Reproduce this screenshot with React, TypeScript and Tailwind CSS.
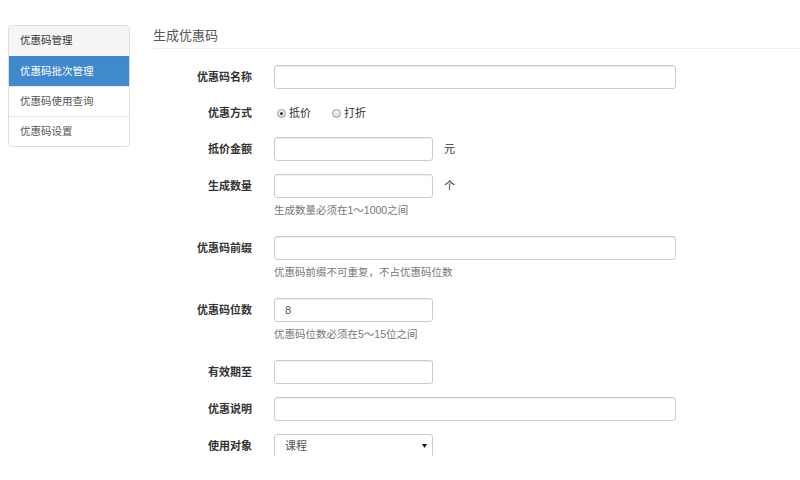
import React from "react";

const font = { fontFamily: '"Liberation Sans", "Noto Sans CJK SC", sans-serif' };

const menu = ["优惠码批次管理", "优惠码使用查询", "优惠码设置"];

function Label({ children }: { children: React.ReactNode }) {
  return (
    <div className="w-[99px] shrink-0 text-right text-[11px] font-bold leading-[24px] text-[#333]">
      {children}
    </div>
  );
}

function Field({ wide, value }: { wide?: boolean; value?: string }) {
  return (
    <div
      className={`h-[24px] ${
        wide ? "w-[402px]" : "w-[159px]"
      } rounded-[3px] border border-[#ccc] bg-white px-[10px] text-[11px] leading-[22px] text-[#555] shadow-[inset_0_1px_1px_rgba(0,0,0,0.075)]`}
    >
      {value}
    </div>
  );
}

function Help({ children }: { children: React.ReactNode }) {
  return (
    <div className="pb-[5px] pl-[121px] pt-[4px] text-[10.5px] leading-[16px] text-[#777]">
      {children}
    </div>
  );
}

function Radio({ checked, label }: { checked?: boolean; label: string }) {
  return (
    <div className="flex items-center">
      <span className="flex h-[9px] w-[9px] items-center justify-center rounded-full border border-[#9a9a9a] bg-gradient-to-b from-[#f4f4f4] to-[#dcdcdc]">
        {checked && <span className="h-[3px] w-[3px] rounded-full bg-[#333]" />}
      </span>
      <span className="ml-[3px] text-[11px] text-[#333]">{label}</span>
    </div>
  );
}

export default function App() {
  return (
    <div className="h-[456px] w-[800px] overflow-hidden bg-white" style={font}>
      <div className="flex pl-[8px] pt-[25px]">
        <div className="h-[122px] w-[122px] shrink-0 overflow-hidden rounded-[4px] border border-[#ddd] text-[10.5px]">
          <div className="flex h-[30px] items-center bg-[#f5f5f5] pl-[11px] text-[#333]">优惠码管理</div>
          {menu.map((item, i) => (
            <div
              key={item}
              className={`flex h-[30px] items-center border-t pl-[11px] ${
                i === 0
                  ? "border-[#3a87cd] bg-[#3f89cc] text-white"
                  : "border-[#e5e5e5] bg-white text-[#555]"
              }`}
            >
              {item}
            </div>
          ))}
        </div>

        <div className="ml-[23px] flex-1">
          <div className="mt-[2px] border-b border-[#eee] pb-[3px] text-[13px] leading-[18px] text-[#555]">
            生成优惠码
          </div>

          <div className="flex flex-col pt-[16px]">
            <div className="mb-[13px] flex">
              <Label>优惠码名称</Label>
              <div className="ml-[22px]">
                <Field wide />
              </div>
            </div>

            <div className="mb-[13px] flex h-[22px] items-center">
              <div className="w-[99px] shrink-0 text-right text-[11px] font-bold text-[#333]">优惠方式</div>
              <div className="ml-[25px] flex gap-[21px]">
                <Radio checked label="抵价" />
                <Radio label="打折" />
              </div>
            </div>

            <div className="mb-[13px] flex items-center">
              <Label>抵价金额</Label>
              <div className="ml-[22px]">
                <Field />
              </div>
              <span className="ml-[11px] text-[11px] text-[#333]">元</span>
            </div>

            <div className="flex items-center">
              <Label>生成数量</Label>
              <div className="ml-[22px]">
                <Field />
              </div>
              <span className="ml-[11px] text-[11px] text-[#333]">个</span>
            </div>
            <Help>生成数量必须在1～1000之间</Help>

            <div className="mt-[13px] flex">
              <Label>优惠码前缀</Label>
              <div className="ml-[22px]">
                <Field wide />
              </div>
            </div>
            <Help>优惠码前缀不可重复，不占优惠码位数</Help>

            <div className="mt-[13px] flex">
              <Label>优惠码位数</Label>
              <div className="ml-[22px]">
                <Field value="8" />
              </div>
            </div>
            <Help>优惠码位数必须在5～15位之间</Help>

            <div className="mb-[13px] mt-[13px] flex">
              <Label>有效期至</Label>
              <div className="ml-[22px]">
                <Field />
              </div>
            </div>

            <div className="mb-[13px] flex">
              <Label>优惠说明</Label>
              <div className="ml-[22px]">
                <Field wide />
              </div>
            </div>

            <div className="flex">
              <Label>使用对象</Label>
              <div className="ml-[22px] flex h-[24px] w-[159px] items-center justify-between rounded-[3px] border border-[#ccc] bg-white pl-[10px] pr-[5px] text-[11px] text-[#555]">
                <span>课程</span>
                <svg width="5" height="4" viewBox="0 0 5 4">
                  <path d="M0 0h5L2.5 4z" fill="#111" />
                </svg>
              </div>
            </div>
          </div>
        </div>
      </div>
    </div>
  );
}
